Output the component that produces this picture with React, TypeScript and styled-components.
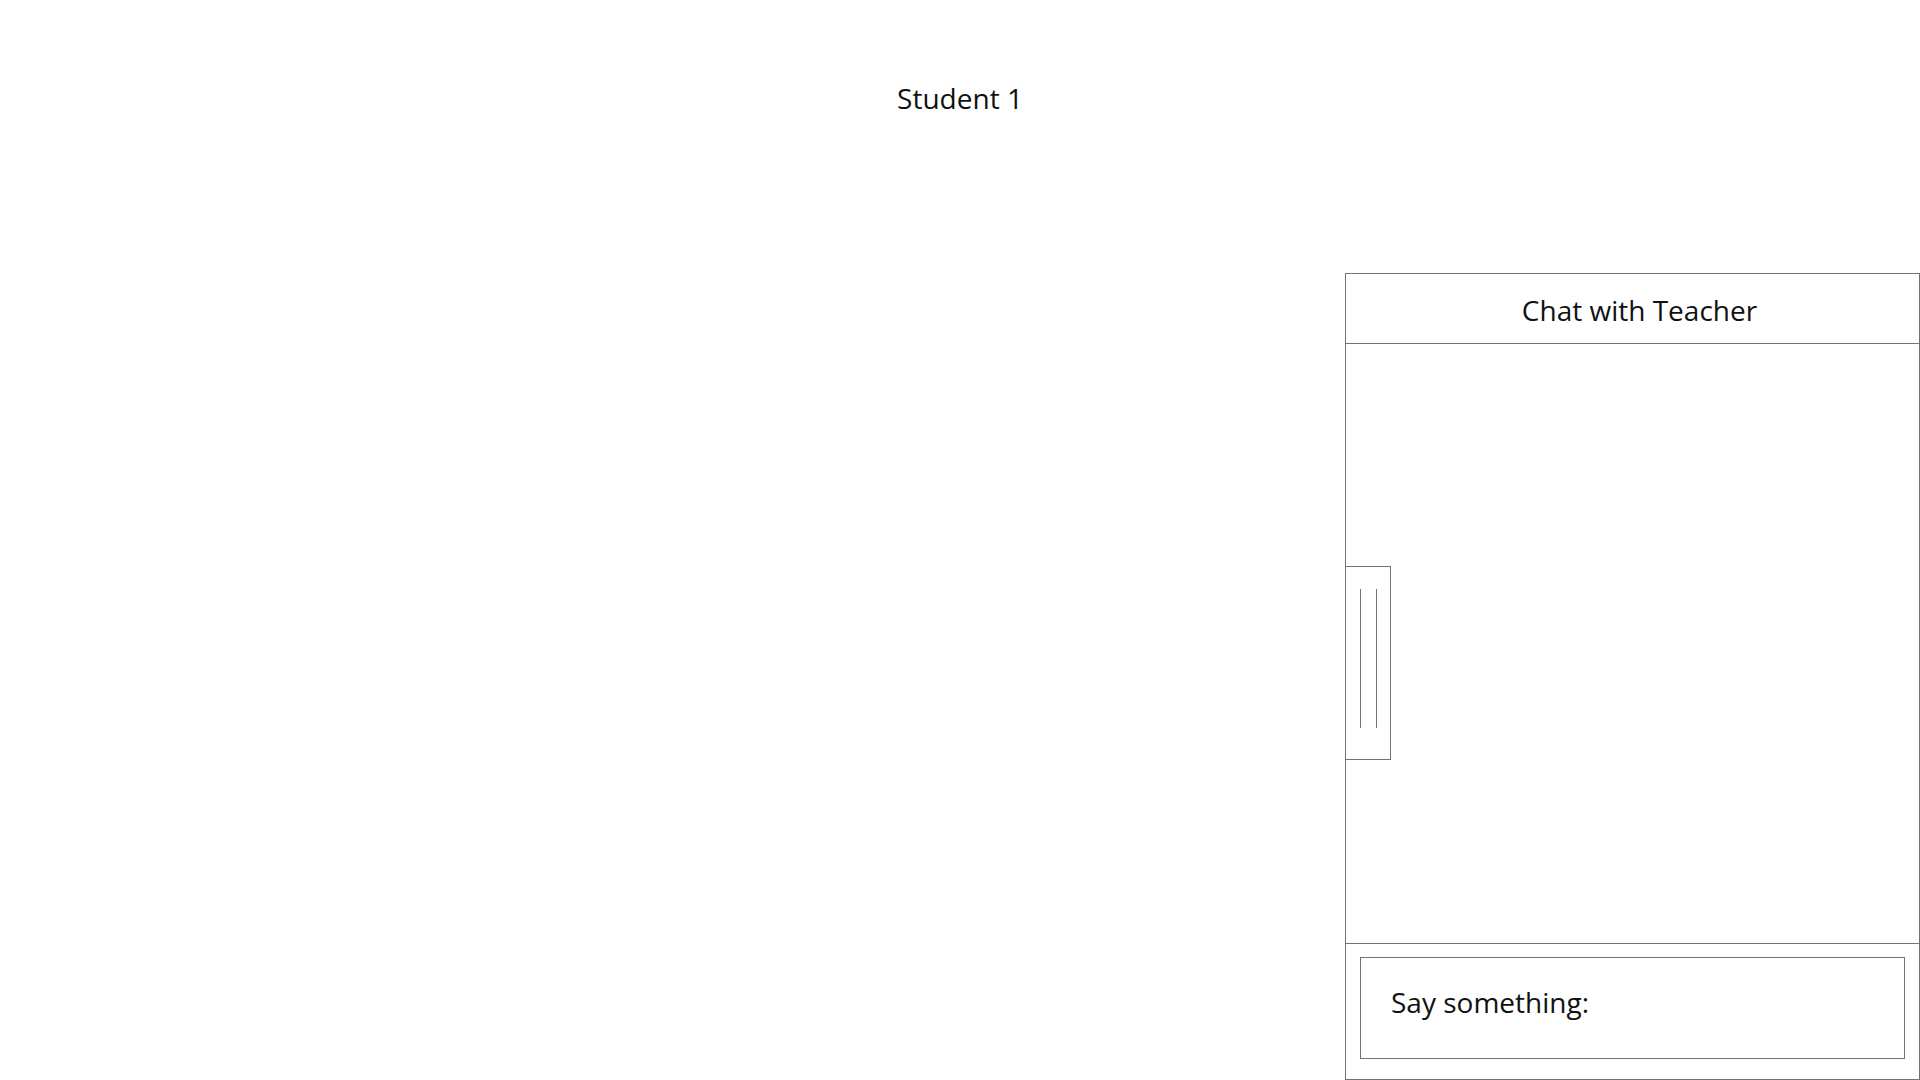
import React from "react";
import styled, { createGlobalStyle } from "styled-components";

const Global = createGlobalStyle`
  html, body { margin: 0; padding: 0; background: #ffffff; }
  body { font-family: "Open Sans", "Noto Sans", sans-serif; color: #111111; }
`;

const LINE = "#737373";

const Page = styled.div`
  width: 1920px;
  height: 1080px;
  display: flex;
  flex-direction: column;
  overflow: hidden;
`;

const Title = styled.h1`
  margin: 0;
  padding-top: 76px;
  height: 197px;
  box-sizing: border-box;
  text-align: center;
  font-weight: 400;
  font-size: 28px;
  line-height: 44px;
`;

const Main = styled.main`
  flex: 1;
  display: flex;
  justify-content: flex-end;
  align-items: flex-end;
`;

const ChatPanel = styled.section`
  position: relative;
  width: 575px;
  height: 807px;
  box-sizing: border-box;
  border: 1px solid ${LINE};
  display: flex;
  flex-direction: column;
`;

const Header = styled.header`
  height: 70px;
  box-sizing: border-box;
  border-bottom: 1px solid ${LINE};
  display: flex;
  align-items: center;
  justify-content: center;
  padding: 2px 0 0 14px;
  font-size: 28px;
`;

const Messages = styled.div`
  flex: 1;
`;

const Footer = styled.footer`
  border-top: 1px solid ${LINE};
  padding: 13px 14px 20px 14px;
`;

const InputBox = styled.div`
  height: 102px;
  box-sizing: border-box;
  border: 1px solid ${LINE};
  display: flex;
  align-items: center;
  padding: 0 0 12px 30px;
  font-size: 28px;
`;

const Handle = styled.div`
  position: absolute;
  left: -1px;
  top: 292px;
  width: 46px;
  height: 194px;
  box-sizing: border-box;
  border: 1px solid ${LINE};
  background: #ffffff;
  display: flex;
  gap: 15px;
  padding: 22px 0 0 14px;
`;

const Grip = styled.span`
  width: 1px;
  height: 139px;
  background: ${LINE};
`;

export default function App() {
  return (
    <>
      <Global />
      <Page>
        <Title>Student 1</Title>
        <Main>
          <ChatPanel>
            <Header>Chat with Teacher</Header>
            <Messages />
            <Footer>
              <InputBox>Say something:</InputBox>
            </Footer>
            <Handle>
              <Grip />
              <Grip />
            </Handle>
          </ChatPanel>
        </Main>
      </Page>
    </>
  );
}
